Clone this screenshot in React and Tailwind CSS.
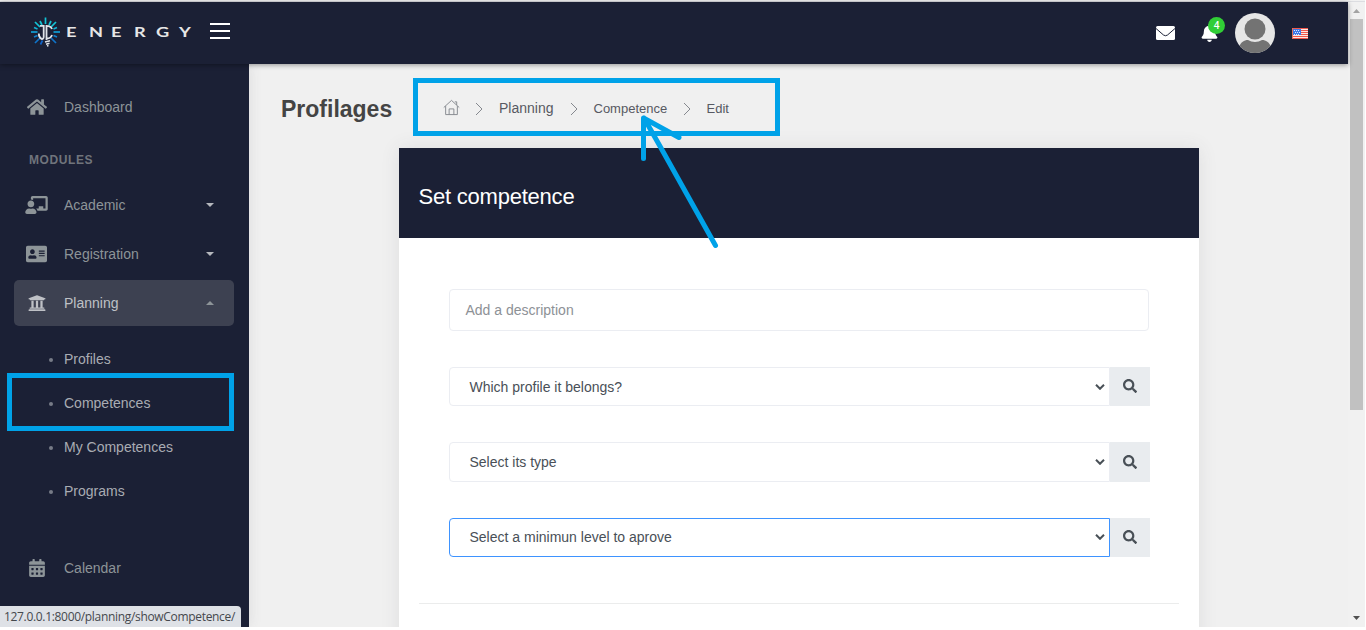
import { FaHome, FaChalkboardTeacher, FaAddressCard, FaUniversity, FaCalendarAlt, FaSearch, FaBell } from "react-icons/fa";

const RAYS = [
  [14.5, 0.5, 14.5, 7, "#12c4d6"], [9, 4, 11, 8, "#12c4d6"], [20, 4, 18, 8, "#12c4d6"],
  [4, 5, 9, 10, "#12c4d6"], [25, 5, 20, 10, "#12c4d6"], [3, 10.5, 6.5, 12, "#12b4d6"], [26, 10.5, 22.5, 12, "#12b4d6"],
  [0, 15, 6.5, 15, "#109fd6"], [22.5, 15, 29, 15, "#109fd6"],
  [3, 20, 6.5, 18.5, "#0f83d0"], [26, 20, 22.5, 18.5, "#0f83d0"],
  [4, 26, 9, 21, "#0f73c8"], [25, 26, 20, 21, "#0f73c8"], [9.5, 27.5, 11.5, 23.5, "#0f63c8"],
];

function LogoMark() {
  return (
    <svg width="30" height="30" viewBox="0 0 30 30" fill="none" className="shrink-0">
      {RAYS.map(([x1, y1, x2, y2, c]) => (
        <line key={`${x1}-${y1}`} x1={x1} y1={y1} x2={x2} y2={y2} stroke={c} strokeWidth="1.7" />
      ))}
      <path d="M9 8.800h3.700v11c0 1.800-1 2.500-2.200 2.100C8.700 21 7.800 19 7.800 16.500" stroke="#dfe3e8" strokeWidth="1.800" />
      <path d="M15.500 8v15M21 12c-.8-2.300-2.500-3.300-5.500-3.200M21 18c-.8 2.500-2.500 3.600-5.500 3.500" stroke="#dfe3e8" strokeWidth="1.800" />
      <path d="M14 25l5-1.200M15 27.200l3.500-1M16 29l1.500-.5" stroke="#dfe3e8" strokeWidth="1.500" />
    </svg>
  );
}

function Flag() {
  return (
    <svg width="16" height="11" viewBox="0 0 16 11" shapeRendering="crispEdges">
      <rect width="16" height="11" fill="#fbe9e4" />
      {[0, 2, 4, 6, 8, 10].map((y) => <rect key={y} y={y} width="16" height="1" fill="#f0584c" />)}
      <rect x="1" y="1" width="8" height="6" fill="#3f7ae8" />
      {[2, 4, 6].map((y, r) => [2, 4, 6].map((x) => <rect key={`${x}-${y}`} x={x + (r % 2)} y={y} width="1" height="1" fill="#e2ebfc" />))}
      <path d="M0 0v11h16V0" fill="none" stroke="#e0745c" strokeWidth="1" />
    </svg>
  );
}

function Header() {
  return (
    <header className="relative z-10 flex h-[62px] w-[1348px] items-start bg-[#1b2035] shadow-[0_1px_5px_rgba(0,0,0,0.4)]">
      <div className="flex pl-[31px] pt-[15px]">
        <LogoMark />
        <div className="ml-[5px] mt-[4px] h-[22px] w-[129px]">
          <div className="flex w-[125px] justify-between font-['Lato'] text-[14px] font-bold leading-[21px] text-[#e6e6e6]">
            {"ENERGY".split("").map((c, i) => <span key={i} className="w-[12px] origin-left scale-x-[1.3]">{c}</span>)}
          </div>
        </div>
      </div>
      <div className="ml-[15px] mt-[21px] flex w-[20px] flex-col gap-[5px]">
        <i className="h-[2px] bg-white" /><i className="h-[2px] bg-white" /><i className="h-[2px] bg-white" />
      </div>
      <svg className="ml-auto mt-[24px]" width="19" height="14" viewBox="0 0 19 14">
        <rect width="19" height="14" rx="1.500" fill="#fff" />
        <path d="M0 2.500l7.500 6.500q2 1.500 4 0L19 2.500" fill="none" stroke="#1b2035" />
      </svg>
      <div className="relative ml-[26px] mt-[22px] h-[18px] w-[17px]">
        <FaBell className="h-[18px] w-[17px] text-white" />
        <span className="absolute -top-[7px] left-[7px] flex h-[17px] w-[17px] items-center justify-center rounded-full bg-[#31ce36] font-['Open_Sans'] text-[10px] font-semibold text-white">4</span>
      </div>
      <svg className="ml-[17px] mt-[11px]" width="40" height="40" viewBox="0 0 40 40">
        <defs><clipPath id="avatar"><circle cx="20" cy="20" r="20" /></clipPath></defs>
        <g clipPath="url(#avatar)">
          <rect width="40" height="40" fill="#e6e6e6" />
          <path d="M4 34c2-5 5-7 9-7 4 2.500 10 2.500 14 0 4 0 7 2 9 7v8H4z" fill="#737373" />
          <circle cx="20" cy="16" r="10.500" fill="#737373" />
        </g>
      </svg>
      <div className="ml-[17px] mr-[40px] mt-[26px]"><Flag /></div>
    </header>
  );
}

function NavItem({ icon: Icon, label, caret, active, iconClass }) {
  return (
    <div className={`mx-[14px] flex h-[46px] w-[220px] items-center rounded-[5px] ${active ? "bg-[#3d4151] text-[#bfc1c6]" : "text-[#8d9498]"}`}>
      <span className="flex w-[45px] justify-center"><Icon className={iconClass} /></span>
      <span className="ml-[5px]">{label}</span>
      {caret && (
        <svg className="ml-auto mr-[20px]" width="8" height="4" viewBox="0 0 8 4">
          <path d={active ? "M0 4L4 0l4 4z" : "M0 0h8L4 4z"} fill={active ? "#8d9498" : "#b5b8bd"} />
        </svg>
      )}
    </div>
  );
}

function Sidebar() {
  return (
    <aside className="flex h-[563px] w-[249px] shrink-0 flex-col bg-[#1b2035] text-[14px] shadow-[1px_0_12px_rgba(69,65,78,0.1)]">
      <div className="pt-[20px]"><NavItem icon={FaHome} label="Dashboard" iconClass="h-[20px] w-[20px]" /></div>
      <div className="mt-[23px] h-[14px] pl-[29px] text-[12px] font-bold leading-[14px] tracking-[0.6px] text-[#70747c]">MODULES</div>
      <div className="mt-[15px] flex flex-col gap-[3px]">
        <NavItem icon={FaChalkboardTeacher} label="Academic" caret iconClass="h-[18px] w-[23px]" />
        <NavItem icon={FaAddressCard} label="Registration" caret iconClass="h-[20px] w-[21px]" />
        <NavItem icon={FaUniversity} label="Planning" caret active iconClass="h-[18px] w-[18px]" />
      </div>
      <ul className="mt-[11px]">
        {["Profiles", "Competences", "My Competences", "Programs"].map((t) => (
          <li key={t} className="flex h-[44px] items-center pl-[49px] text-[#a9acb3]">
            <i className="mr-[11px] mt-[2px] h-[4px] w-[4px] rounded-full bg-[#777b87]" />{t}
          </li>
        ))}
      </ul>
      <div className="mt-[32px]"><NavItem icon={FaCalendarAlt} label="Calendar" iconClass="h-[18px] w-[16px]" /></div>
    </aside>
  );
}

function Chevron() {
  return <svg className="shrink-0" width="8" height="14" viewBox="0 0 8 14" fill="none" stroke="#85888e"><path d="M1 1l6 6-6 6" /></svg>;
}

function Select({ label, focused, height }) {
  return (
    <div className={`flex w-[701px] ${height}`}>
      <div className={`flex w-[661px] items-center rounded-l-[4px] border bg-white pl-[19.5px] pr-[4px] text-[#495057] ${focused ? "border-[#3e93ff] pb-[1px]" : "border-[#ebedf2]"}`}>
        <span className="leading-[16px]">{label}</span>
        <svg className="ml-auto" width="10" height="6" viewBox="0 0 10 6" fill="none" stroke="#495057" strokeWidth="2"><path d="M1 .8l4 4 4-4" /></svg>
      </div>
      <div className="flex flex-1 items-center justify-center bg-[#e9ecef] pb-[1px] pr-[1px]"><FaSearch className="h-[14px] w-[14px] text-[#495057]" /></div>
    </div>
  );
}

export default function App() {
  return (
    <div className="relative h-[630px] w-[1366px] overflow-hidden bg-white font-['Liberation_Sans',sans-serif] text-[14px]">
      <div className="relative flex h-[627px] w-[1365px] flex-col overflow-hidden bg-[#f0f0f0]">
        <div className="h-[2px] shrink-0 border-b border-[#dcdde1] bg-[#f1f1f1]" />
        <div className="flex h-[625px]">
          <div className="h-[625px] w-[1348px] shrink-0">
            <Header />
            <div className="flex">
              <Sidebar />
              <main className="w-[1099px]">
                <div className="flex h-[84px] items-center pl-[32px] pt-[5px] text-[#575962]">
                  <h1 className="w-[162px] shrink-0 text-[23px] font-bold leading-[28px] text-[#444]">Profilages</h1>
                  <div className="flex items-center">
                    <svg className="mb-[2px] shrink-0" width="17" height="17" viewBox="0 0 18 17" fill="none" stroke="#85888e"><path d="M.8 8.500L9 1l8.200 7.500M2.800 7v9h12.400V7M6.500 16v-6h5v6M12.500 2.500h2V6" /></svg>
                    <span className="ml-[15px] mr-[16px]"><Chevron /></span><span>Planning</span>
                    <span className="ml-[16px] mr-[16px]"><Chevron /></span><span className="w-[73px] text-[13px]">Competence</span>
                    <span className="ml-[16px] mr-[16px]"><Chevron /></span><span className="text-[13px]">Edit</span>
                  </div>
                </div>
                <section className="ml-[150px] h-[500px] w-[800px] bg-white shadow-[0_0_18px_rgba(69,65,78,0.1)]">
                  <div className="flex h-[90px] items-center bg-[#1b2035] pl-[19.5px] pt-[6px] text-[22px] tracking-[-0.22px] text-white">Set competence</div>
                  <div className="px-[50px] pt-[51px]">
                    <div className="flex h-[42px] w-[700px] items-center rounded-[4px] border border-[#ebedf2] pl-[15.5px] text-[#8d9196]">Add a description</div>
                    <div className="mt-[36px] flex flex-col gap-[36px]">
                      <Select label="Which profile it belongs?" height="h-[39px]" />
                      <Select label="Select its type" height="h-[40px]" />
                      <Select label="Select a minimun level to aprove" focused height="h-[39px]" />
                    </div>
                  </div>
                  <div className="mx-[20px] mt-[46px] border-t border-[#ebecec]" />
                </section>
              </main>
            </div>
          </div>
          <div className="flex w-[17px] flex-col items-center bg-[#f1f1f1]">
            <svg className="mt-[7px]" width="7" height="4" viewBox="0 0 7 4"><path d="M0 4L3.500 0 7 4z" fill="#a3a3a3" /></svg>
            <div className="mt-[6px] h-[391px] w-[13px] bg-[#c1c1c1]" />
            <svg className="mb-[7px] mt-auto" width="7" height="4" viewBox="0 0 7 4"><path d="M0 0h7L3.500 4z" fill="#505050" /></svg>
          </div>
        </div>
        <div className="absolute bottom-0 left-0 z-20 flex h-[21px] w-[241px] items-center rounded-tr-[4px] bg-[#dee1e6] pl-[4px] font-['Open_Sans'] text-[12px] tracking-[-0.32px] text-[#45484d]">
          <span className="whitespace-nowrap">127.0.0.1:8000/planning/showCompetence/</span>
        </div>
        <div className="absolute left-[7px] top-[373px] z-20 h-[58px] w-[227px] border-[5px] border-[#00a2e8]" />
        <div className="absolute left-[413px] top-[78px] z-20 h-[58px] w-[367px] border-[5px] border-[#00a2e8]" />
        <svg className="absolute left-[636px] top-[110px] z-20" width="90" height="142" viewBox="636 110 90 142" fill="none" stroke="#00a2e8" strokeWidth="5" strokeLinecap="round" strokeLinejoin="round">
          <path d="M643.500 158.500V118l35.500 19.500M644 118l17 30L715.500 245.500" />
        </svg>
      </div>
    </div>
  );
}
